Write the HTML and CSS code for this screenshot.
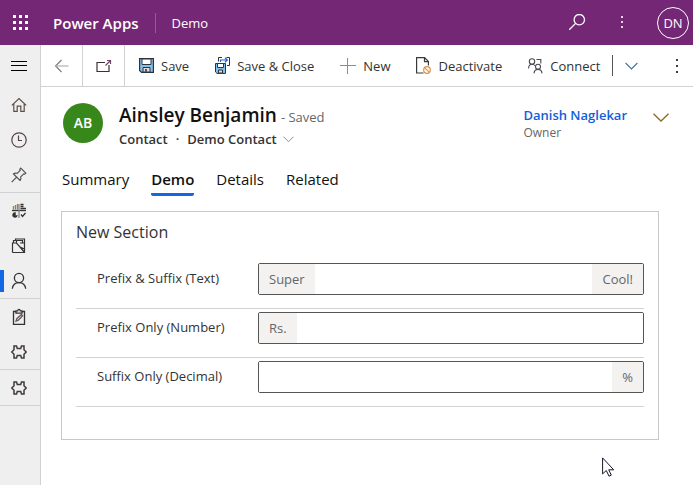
FILE: index.html
```html
<!DOCTYPE html>
<html lang="en">
<head>
<meta charset="utf-8">
<meta name="viewport" content="width=device-width, initial-scale=1">
<title>Contact: Ainsley Benjamin - Power Apps</title>
<link rel="stylesheet" href="styles.css">
</head>
<body>
<header class="topbar">
  <button class="icon-btn waffle" aria-label="App launcher">
    <svg width="16" height="16" viewBox="0 0 16 16" fill="#fff"><path d="M0 0h3v3H0zM6 0h3v3H6zM12 0h3v3h-3zM0 6h3v3H0zM6 6h3v3H6zM12 6h3v3h-3zM0 12h3v3H0zM6 12h3v3H6zM12 12h3v3h-3z"/></svg>
  </button>
  <a class="brand" href="#">Power Apps</a>
  <a class="app-name" href="#">Demo</a>
  <div class="top-actions">
    <button class="icon-btn" aria-label="Search">
      <svg width="18" height="18" viewBox="0 0 18 18" fill="none" stroke="#fff" stroke-width="1.3"><circle cx="10.3" cy="5.7" r="5.2"/><path d="M6.6 9.4L.2 15.8"/></svg>
    </button>
    <button class="icon-btn" aria-label="More">
      <svg width="4" height="14" viewBox="0 0 4 14" fill="#e6d6e6"><path d="M0 0h2v2H0zM0 5h2v2H0zM0 10h2v2H0z"/></svg>
    </button>
    <button class="account" aria-label="Account DN">DN</button>
  </div>
</header>
<div class="shell">
  <nav class="sidebar" aria-label="Site map">
    <button class="side-item menu" aria-label="Expand menu">
      <svg width="16" height="10" viewBox="0 0 16 10" stroke="#000"><path d="M0 .5h16M0 4.5h16M0 9.5h16"/></svg>
    </button>
    <div class="side-group">
      <a class="side-item" href="#" aria-label="Home"><svg width="16" height="16" viewBox="0 0 16 16" fill="none" stroke="#5c5049" stroke-width="1.2"><path d="M.8 8.4L8 1.5l7.2 6.9M2.8 6.8v7.6h3.4V9.2h3.6v5.2h3.4V6.8"/></svg></a>
      <a class="side-item" href="#" aria-label="Recent"><svg width="16" height="16" viewBox="0 0 16 16" fill="none" stroke="#55434c" stroke-width="1.2"><circle cx="8" cy="8" r="7.2"/><path d="M7.5 3.5v5H11"/></svg></a>
      <a class="side-item" href="#" aria-label="Pinned"><svg width="16" height="16" viewBox="0 0 16 16" fill="none" stroke="#55504d" stroke-width="1.2"><path d="M9.8 1.2l5 5-1.2 1-.9-.3-3 3c.5 1.5.2 2.7-.7 3.6L2.5 7c1-.9 2.2-1.2 3.7-.7l3-3-.4-1zM5.6 10.2L.7 15.2"/></svg></a>
    </div>
    <div class="side-group">
      <a class="side-item" href="#" aria-label="Dashboards"><svg width="16" height="16" viewBox="0 0 16 16" fill="none" stroke="#333" stroke-width="1.3"><path d="M1 7.5h14"/><path d="M8 1v14" stroke="#7f8990"/><path d="M2.5 6.500V3M4.500 6.500V2M6.500 6.500V1" stroke="#b5713a"/><path d="M9.500 1.500h3M9.500 3.500h3M9.500 5.500H15M10 11.500l1.500 2 3-3.500"/><path d="M4.500 9.500A2.500 2.500 0 1 0 6.500 12.500H4.500z" fill="#333" stroke-width=".5"/></svg></a>
      <a class="side-item" href="#" aria-label="Activities"><svg width="16" height="16" viewBox="0 0 16 16" fill="none" stroke="#333" stroke-width="1.2"><path d="M1.5 14.5V5h4l3.500 4 4.500 2M1.500 14.500h12V5L9 5M5.500 5V2.500H2.500V5M2.500 2.500h9V5M4.500 2.500v-1.500h9V14.500M9 9l4.500 5.500"/></svg></a>
      <a class="side-item current" href="#" aria-label="Contacts" aria-current="page"><svg width="16" height="18" viewBox="0 0 16 18" fill="none" stroke="#333" stroke-width="1.3"><circle cx="8" cy="6" r="4.6"/><path d="M1.3 16.8c.4-3.8 3-6.2 6.7-6.2s6.3 2.4 6.7 6.2"/></svg></a>
    </div>
    <div class="side-group">
      <a class="side-item" href="#" aria-label="Surveys"><svg width="16" height="18" viewBox="0 0 16 18" fill="none" stroke="#333" stroke-width="1.3"><path d="M5 3.5H2.5v12.8h11V3.5H11M5 5.2V2.8h1.7C7 .8 9 .8 9.3 2.8H11v2.4z"/><path d="M5 13.2l.8-2.5 4.6-4.2 1.2 1.2-4.2 4.5z" stroke="#6a5864"/></svg></a>
      <a class="side-item" href="#" aria-label="Extension"><svg width="16" height="16" viewBox="0 0 16 16" fill="none" stroke="#423a40" stroke-width="1.5"><path d="M3 2h2.500l.8 2.500h3.400L10.500 2H13v3.800L15.200 8 13 10.200V14h-2.500l-.8-2.500H6.300L5.500 14H3v-3.800L.8 8 3 5.800z"/></svg></a>
    </div>
    <div class="side-group">
      <a class="side-item" href="#" aria-label="Extension two"><svg width="16" height="16" viewBox="0 0 16 16" fill="none" stroke="#423a40" stroke-width="1.5"><path d="M3 2h2.500l.8 2.500h3.400L10.500 2H13v3.800L15.200 8 13 10.200V14h-2.500l-.8-2.500H6.300L5.500 14H3v-3.800L.8 8 3 5.800z"/></svg></a>
    </div>
  </nav>
  <main class="page">
    <div class="commands" role="toolbar" aria-label="Commands">
      <button class="cmd-square" aria-label="Back"><svg width="14" height="14" viewBox="0 0 14 14" fill="none" stroke="#777" stroke-width="1.1"><path d="M6.5 1l-6 6 6 6"/><path d="M.5 7h13" stroke="#aaa"/></svg></button>
      <button class="cmd-square" aria-label="Open in new window"><svg width="16" height="14" viewBox="0 0 16 14" fill="none" stroke="#3b3037" stroke-width="1.2"><path d="M9 3.5H1v9h12V6"/><path d="M9.5 6.5l5-5M11 1.5h3.500V5" stroke="#704466"/></svg></button>
      <button class="cmd"><svg width="15" height="15" viewBox="0 0 15 15"><path d="M.6.6h13.800v13.800H2.600L.6 12.400z" fill="#83c2ef" stroke="#30323b" stroke-width="1.2"/><path d="M3 1h9v5.500H3z" fill="#fff" stroke="#30323b"/><path d="M4 14V9.500h7V14z" fill="#ddd" stroke="#30323b"/><path d="M6 11h2v3H6z" fill="#555"/></svg>Save</button>
      <button class="cmd"><svg width="15" height="17" viewBox="0 0 15 17"><path d="M.5 6.500h10v9.900H2L.5 15z" fill="#83c2ef" stroke="#30323b"/><path d="M2.500 6.500h6v4h-6z" fill="#fff" stroke="#30323b"/><path d="M3.500 16v-3h4v3z" fill="#ddd" stroke="#30323b"/><path d="M3.500 4.500v-4H7M11.500.5h3v8H12" fill="none" stroke="#30323b"/><path d="M5.500 5V3H12M10 .8L12.300 3 10 5.200" fill="none" stroke="#1a66dc" stroke-width="1.2"/></svg>Save &amp; Close</button>
      <button class="cmd"><svg width="16" height="16" viewBox="0 0 16 16" fill="none" stroke="#8e8b8b"><path d="M7.500 0v16M0 7.500h16"/></svg>New</button>
      <button class="cmd"><svg width="15" height="17" viewBox="0 0 15 17" fill="none"><path d="M7.500 16H.6V.6h8L12.400 4.500v4M8.500 1v3.700h4" stroke="#3a3a3a" stroke-width="1.2"/><circle cx="11" cy="13" r="3.300" stroke="#d99145" stroke-width="1.2"/><path d="M8.800 10.800l4.400 4.400" stroke="#d99145" stroke-width="1.2"/></svg>Deactivate</button>
      <button class="cmd"><svg width="15" height="16" viewBox="0 0 15 16" fill="none" stroke="#4c4850" stroke-width="1.1"><circle cx="4" cy="3.500" r="2.700"/><path d="M.6 10.500C.6 7.800 2 6.300 4 6.300c1.300 0 2.300.5 3 1.500M8.500 1.500h4.300v4"/><circle cx="10" cy="8.800" r="2.500"/><path d="M6 15.400c.2-2.700 1.600-4 4-4s3.800 1.300 4 4"/></svg>Connect</button>
      <button class="cmd-split" aria-label="More connect options"><svg width="13" height="8" viewBox="0 0 13 8" fill="none" stroke="#427197" stroke-width="1.1"><path d="M.6 1l5.900 5.900L12.400 1"/></svg></button>
      <button class="cmd-more" aria-label="More commands"><svg width="4" height="14" viewBox="0 0 4 14" fill="#3d3d3d"><path d="M1 0h2v2H1zM1 6h2v2H1zM1 12h2v2H1z"/></svg></button>
    </div>
    <section class="record">
      <div class="avatar" aria-hidden="true">AB</div>
      <div class="identity">
        <div class="name-line"><h1>Ainsley Benjamin</h1><span class="saved">- Saved</span></div>
        <div class="form-line"><span>Contact</span><span>·</span><button class="form-switch">Demo Contact<svg width="11" height="7" viewBox="0 0 11 7" fill="none" stroke="#8d8d8d"><path d="M.5.7l5 5 5-5"/></svg></button></div>
      </div>
      <div class="owner"><a href="#">Danish Naglekar</a><span>Owner</span></div>
      <button class="icon-btn expand" aria-label="Expand header"><svg width="16" height="9" viewBox="0 0 16 9" fill="none" stroke="#8a6a2c" stroke-width="1.3"><path d="M.5.7L8 8 15.500.7"/></svg></button>
    </section>
    <div class="tabs" role="tablist">
      <button role="tab" aria-selected="false">Summary</button>
      <button role="tab" aria-selected="true">Demo</button>
      <button role="tab" aria-selected="false">Details</button>
      <button role="tab" aria-selected="false">Related</button>
    </div>
    <section class="card">
      <h2>New Section</h2>
      <div class="row">
        <label for="both">Prefix &amp; Suffix (Text)</label>
        <div class="field"><span class="affix">Super</span><input id="both" type="text"><span class="affix">Cool!</span></div>
      </div>
      <div class="row">
        <label for="prefix">Prefix Only (Number)</label>
        <div class="field"><span class="affix">Rs.</span><input id="prefix" type="text" inputmode="numeric"></div>
      </div>
      <div class="row">
        <label for="suffix">Suffix Only (Decimal)</label>
        <div class="field"><input id="suffix" type="text" inputmode="decimal"><span class="affix">%</span></div>
      </div>
    </section>
    <svg class="pointer" width="13" height="20" viewBox="0 0 13 20" aria-hidden="true"><path d="M.6.9v16l3.700-3.400 2.700 5.700 2.300-1.100-2.600-5.300h5z" fill="#fff" stroke="#1c1424"/></svg>
  </main>
</div>
</body>
</html>
```
FILE: styles.css
```css
* { box-sizing: border-box; }

body {
  margin: 0;
  min-height: 100vh;
  display: flex;
  flex-direction: column;
  font: 13px/20px "Open Sans", "Noto Sans", sans-serif;
  color: #333;
  background: #fff;
}

button {
  font: inherit;
  color: inherit;
  background: none;
  border: 0;
  padding: 0;
}

a { color: inherit; text-decoration: none; }
svg { display: block; flex: none; }
h1, h2 { margin: 0; }

.topbar {
  display: flex;
  align-items: center;
  height: 45px;
  padding-right: 4px;
  background: #742774;
  color: #fff;
}

.icon-btn {
  display: flex;
  align-items: center;
  justify-content: center;
}

.waffle { width: 41px; height: 45px; }

.brand {
  padding: 0 16px 0 12px;
  font-size: 15px;
  font-weight: 600;
  border-right: 1px solid #955b95;
}

.app-name { padding-left: 16px; }

.top-actions {
  display: flex;
  align-items: center;
  margin-left: auto;
}

.top-actions .icon-btn { width: 45px; height: 45px; }

.account {
  width: 32px;
  height: 32px;
  margin-left: 12px;
  border: 1px solid #fff;
  border-radius: 50%;
}

.shell { display: flex; flex: 1; }

.sidebar {
  flex: none;
  width: 41px;
  background: #eeefee;
  border-right: 1px solid #d2d2d2;
}

.side-item {
  display: flex;
  align-items: center;
  justify-content: center;
  width: 38px;
  height: 35px;
}

.side-item.menu { height: 42px; }
.side-group { border-bottom: 1px solid #d2d2d2; }

.current {
  background: linear-gradient(#1267e4, #1267e4) 0 50% / 4px 22px no-repeat;
}

.page {
  position: relative;
  flex: 1;
  min-width: 0;
}

.commands {
  display: flex;
  align-items: stretch;
  height: 42px;
  border-bottom: 1px solid #d2d2d2;
}

.cmd-square {
  display: flex;
  align-items: center;
  justify-content: center;
  width: 42px;
  border-right: 1px solid #d2d2d2;
}

.cmd {
  display: flex;
  align-items: center;
  gap: 7px;
  padding: 0 12px 0 14px;
  white-space: nowrap;
}

.cmd-split {
  display: flex;
  align-items: center;
  align-self: center;
  height: 21px;
  padding-left: 12px;
  border-left: 1px solid #555;
}

.cmd-more {
  display: flex;
  align-items: center;
  margin-left: auto;
  padding: 0 14px;
}

.record {
  display: flex;
  align-items: flex-start;
  padding: 16px 24px 0 22px;
}

.avatar {
  display: grid;
  place-items: center;
  flex: none;
  width: 40px;
  height: 40px;
  margin-right: 16px;
  border-radius: 50%;
  background: #37871b;
  color: #fff;
  font-size: 14px;
  font-weight: 600;
}

.name-line {
  display: flex;
  align-items: baseline;
  gap: 4px;
  line-height: 24px;
}

.name-line h1 {
  font-size: 19px;
  font-weight: 600;
  color: #111;
}

.saved { color: #666; }

.form-line {
  display: flex;
  gap: 8px;
  line-height: 20px;
  font-weight: 600;
}

.form-switch {
  display: flex;
  align-items: center;
  gap: 6px;
}

.owner {
  display: flex;
  flex-direction: column;
  margin-left: auto;
  padding-top: 2px;
}

.owner a { color: #1160d9; font-weight: 600; }
.owner span { font-size: 12px; line-height: 16px; color: #666; }

.expand { height: 28px; margin-left: 26px; }

.tabs {
  display: flex;
  gap: 22px;
  padding: 20px 21px 0;
  font-size: 15px;
  line-height: 20px;
  color: #111;
}

.tabs button {
  padding-bottom: 4px;
  border-bottom: 3px solid transparent;
  border-radius: 2px;
}

.tabs [aria-selected="true"] {
  font-weight: 600;
  border-bottom-color: #1267e4;
}

.card {
  margin: 15px 34px 0 20px;
  padding: 8px 14px 32px;
  border: 1px solid #c8c8c8;
}

.card h2 {
  margin-bottom: 16px;
  font-size: 16px;
  font-weight: 400;
  line-height: 24px;
}

.row {
  display: grid;
  grid-template-columns: 161px 1fr;
  padding: 3px 0 13px 21px;
  border-bottom: 1px solid #d2d2d2;
}

.row label { line-height: 30px; }

.field {
  display: flex;
  height: 32px;
  border: 1px solid #555;
  border-radius: 2px;
  overflow: hidden;
}

.field input {
  flex: 1;
  min-width: 0;
  padding: 0 8px;
  border: 0;
  outline: 0;
  font: inherit;
}

.affix {
  padding: 0 10px;
  line-height: 30px;
  background: #f3f2f1;
  color: #666;
}

.pointer {
  position: absolute;
  right: 78px;
  bottom: 8px;
}
```
